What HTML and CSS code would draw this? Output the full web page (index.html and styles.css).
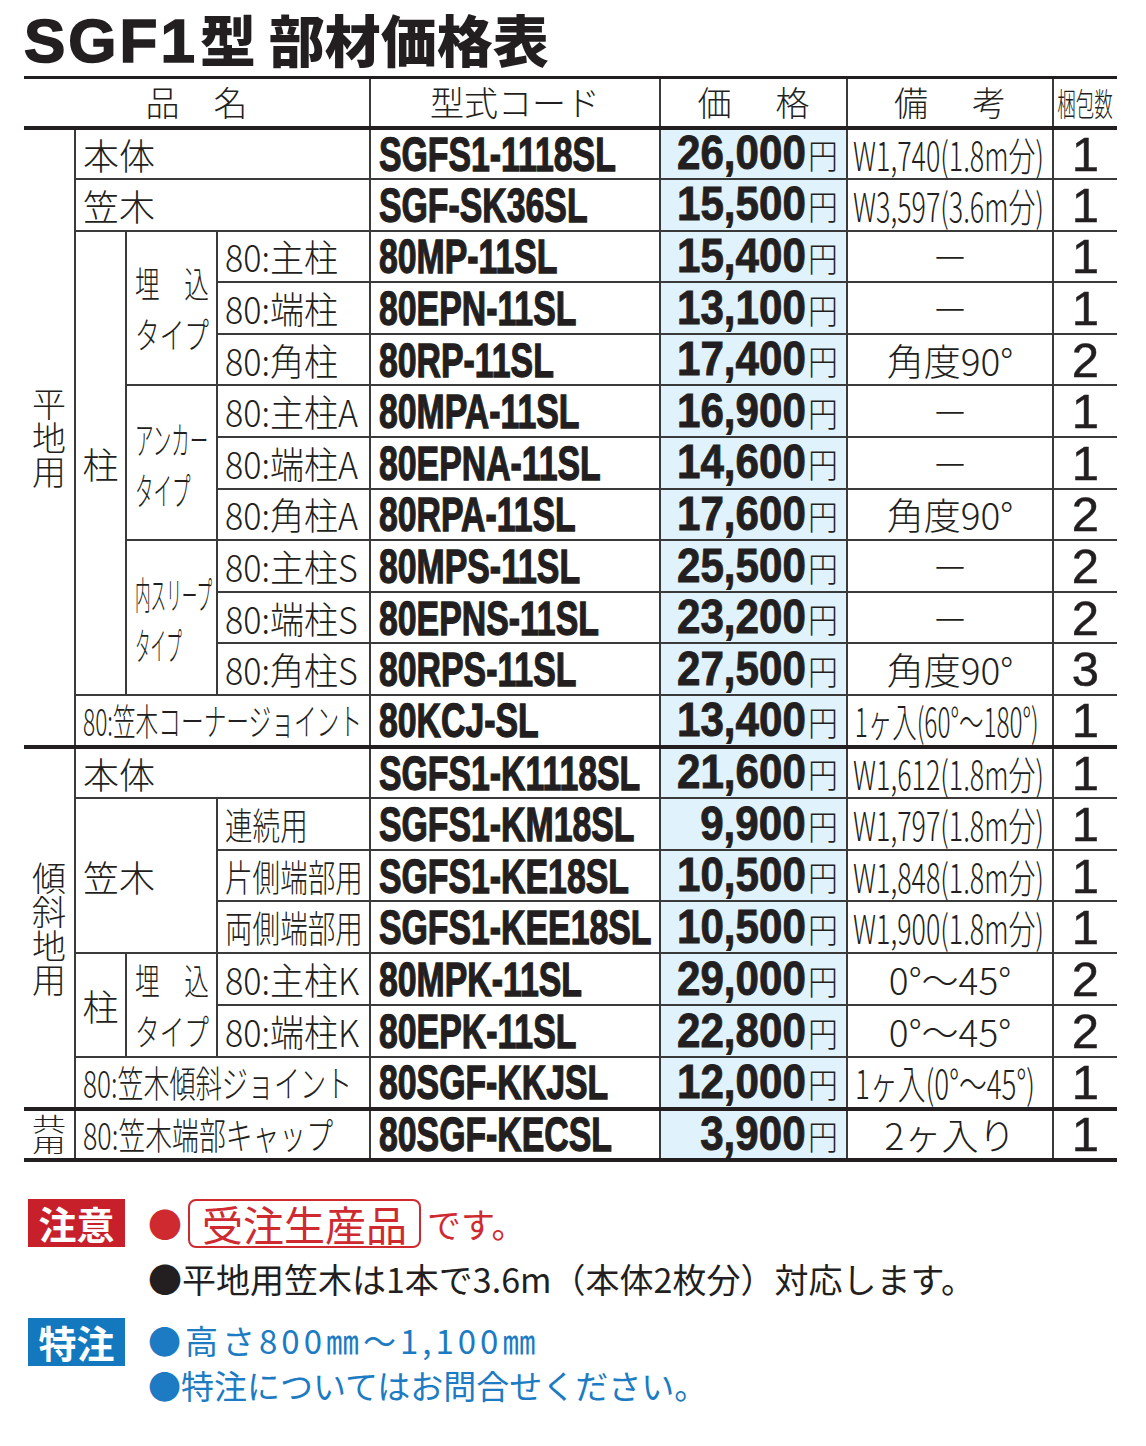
FILE: index.html
```html
<!DOCTYPE html>
<html lang="ja">
<head>
<meta charset="utf-8">
<title>SGF1型 部材価格表</title>
<link rel="stylesheet" href="styles.css">
</head>
<body>
<div class="page">
  <h1 class="title"><span class="t-lat">SGF1</span>型 部材価格表</h1>

  <table class="parts">
    <colgroup>
      <col class="w-grp"><col class="w-sub"><col class="w-type"><col class="w-item">
      <col class="w-code"><col class="w-price"><col class="w-note"><col class="w-qty">
    </colgroup>
    <thead>
      <tr class="head">
        <th colspan="4" class="edge-l">品　名</th>
        <th>型式コード</th>
        <th class="h-sp">価　格</th>
        <th class="h-sp">備　考</th>
        <th class="edge-r"><span class="h-qty">梱包数</span></th>
      </tr>
    </thead>
    <tbody>
      <tr>
        <td rowspan="12" class="grp edge-l">平<br>地<br>用</td>
        <td colspan="3" class="lbl">本体</td>
        <td class="code"><span class="cd">SGFS1-1118SL</span></td>
        <td class="price"><span class="num">26,000</span><span class="yen">円</span></td>
        <td class="note"><span class="nc nc-w">W1,740(1.8m分)</span></td>
        <td class="qty edge-r">1</td>
      </tr>
      <tr>
        <td colspan="3" class="lbl">笠木</td>
        <td class="code"><span class="cd">SGF-SK36SL</span></td>
        <td class="price"><span class="num">15,500</span><span class="yen">円</span></td>
        <td class="note"><span class="nc nc-w">W3,597(3.6m分)</span></td>
        <td class="qty edge-r">1</td>
      </tr>
      <tr>
        <td rowspan="9" class="lbl lbl-c">柱</td>
        <td rowspan="3" class="type"><span class="tp tp-ume"><span class="tl tl-just"><span>埋</span><span>込</span></span><span class="tl">タイプ</span></span></td>
        <td class="item"><span class="it">80:主柱</span></td>
        <td class="code"><span class="cd">80MP-11SL</span></td>
        <td class="price"><span class="num">15,400</span><span class="yen">円</span></td>
        <td class="note note-c">－</td>
        <td class="qty edge-r">1</td>
      </tr>
      <tr>
        <td class="item"><span class="it">80:端柱</span></td>
        <td class="code"><span class="cd">80EPN-11SL</span></td>
        <td class="price"><span class="num">13,100</span><span class="yen">円</span></td>
        <td class="note note-c">－</td>
        <td class="qty edge-r">1</td>
      </tr>
      <tr>
        <td class="item"><span class="it">80:角柱</span></td>
        <td class="code"><span class="cd">80RP-11SL</span></td>
        <td class="price"><span class="num">17,400</span><span class="yen">円</span></td>
        <td class="note note-c">角度90°</td>
        <td class="qty edge-r">2</td>
      </tr>
      <tr>
        <td rowspan="3" class="type"><span class="tp tp-anc"><span class="tl">アンカー</span><span class="tl">タイプ</span></span></td>
        <td class="item"><span class="it">80:主柱A</span></td>
        <td class="code"><span class="cd">80MPA-11SL</span></td>
        <td class="price"><span class="num">16,900</span><span class="yen">円</span></td>
        <td class="note note-c">－</td>
        <td class="qty edge-r">1</td>
      </tr>
      <tr>
        <td class="item"><span class="it">80:端柱A</span></td>
        <td class="code"><span class="cd">80EPNA-11SL</span></td>
        <td class="price"><span class="num">14,600</span><span class="yen">円</span></td>
        <td class="note note-c">－</td>
        <td class="qty edge-r">1</td>
      </tr>
      <tr>
        <td class="item"><span class="it">80:角柱A</span></td>
        <td class="code"><span class="cd">80RPA-11SL</span></td>
        <td class="price"><span class="num">17,600</span><span class="yen">円</span></td>
        <td class="note note-c">角度90°</td>
        <td class="qty edge-r">2</td>
      </tr>
      <tr>
        <td rowspan="3" class="type"><span class="tp tp-sl"><span class="tl">内スリープ</span><span class="tl">タイプ</span></span></td>
        <td class="item"><span class="it">80:主柱S</span></td>
        <td class="code"><span class="cd">80MPS-11SL</span></td>
        <td class="price"><span class="num">25,500</span><span class="yen">円</span></td>
        <td class="note note-c">－</td>
        <td class="qty edge-r">2</td>
      </tr>
      <tr>
        <td class="item"><span class="it">80:端柱S</span></td>
        <td class="code"><span class="cd">80EPNS-11SL</span></td>
        <td class="price"><span class="num">23,200</span><span class="yen">円</span></td>
        <td class="note note-c">－</td>
        <td class="qty edge-r">2</td>
      </tr>
      <tr>
        <td class="item"><span class="it">80:角柱S</span></td>
        <td class="code"><span class="cd">80RPS-11SL</span></td>
        <td class="price"><span class="num">27,500</span><span class="yen">円</span></td>
        <td class="note note-c">角度90°</td>
        <td class="qty edge-r">3</td>
      </tr>
      <tr>
        <td colspan="3" class="lbl"><span class="wd wd-corner">80:笠木コーナージョイント</span></td>
        <td class="code"><span class="cd">80KCJ-SL</span></td>
        <td class="price"><span class="num">13,400</span><span class="yen">円</span></td>
        <td class="note"><span class="nc nc-j1">1ヶ入(60°〜180°)</span></td>
        <td class="qty edge-r">1</td>
      </tr>

      <tr class="sep">
        <td rowspan="7" class="grp edge-l">傾<br>斜<br>地<br>用</td>
        <td colspan="3" class="lbl">本体</td>
        <td class="code"><span class="cd">SGFS1-K1118SL</span></td>
        <td class="price"><span class="num">21,600</span><span class="yen">円</span></td>
        <td class="note"><span class="nc nc-w">W1,612(1.8m分)</span></td>
        <td class="qty edge-r">1</td>
      </tr>
      <tr>
        <td colspan="2" rowspan="3" class="lbl">笠木</td>
        <td class="item"><span class="it it-k">連続用</span></td>
        <td class="code"><span class="cd">SGFS1-KM18SL</span></td>
        <td class="price"><span class="num">9,900</span><span class="yen">円</span></td>
        <td class="note"><span class="nc nc-w">W1,797(1.8m分)</span></td>
        <td class="qty edge-r">1</td>
      </tr>
      <tr>
        <td class="item"><span class="it it-k">片側端部用</span></td>
        <td class="code"><span class="cd">SGFS1-KE18SL</span></td>
        <td class="price"><span class="num">10,500</span><span class="yen">円</span></td>
        <td class="note"><span class="nc nc-w">W1,848(1.8m分)</span></td>
        <td class="qty edge-r">1</td>
      </tr>
      <tr>
        <td class="item"><span class="it it-k">両側端部用</span></td>
        <td class="code"><span class="cd">SGFS1-KEE18SL</span></td>
        <td class="price"><span class="num">10,500</span><span class="yen">円</span></td>
        <td class="note"><span class="nc nc-w">W1,900(1.8m分)</span></td>
        <td class="qty edge-r">1</td>
      </tr>
      <tr>
        <td rowspan="2" class="lbl lbl-c">柱</td>
        <td rowspan="2" class="type"><span class="tp tp-ume"><span class="tl tl-just"><span>埋</span><span>込</span></span><span class="tl">タイプ</span></span></td>
        <td class="item"><span class="it">80:主柱K</span></td>
        <td class="code"><span class="cd">80MPK-11SL</span></td>
        <td class="price"><span class="num">29,000</span><span class="yen">円</span></td>
        <td class="note note-c">0°〜45°</td>
        <td class="qty edge-r">2</td>
      </tr>
      <tr>
        <td class="item"><span class="it">80:端柱K</span></td>
        <td class="code"><span class="cd">80EPK-11SL</span></td>
        <td class="price"><span class="num">22,800</span><span class="yen">円</span></td>
        <td class="note note-c">0°〜45°</td>
        <td class="qty edge-r">2</td>
      </tr>
      <tr>
        <td colspan="3" class="lbl"><span class="wd wd-slope">80:笠木傾斜ジョイント</span></td>
        <td class="code"><span class="cd">80SGF-KKJSL</span></td>
        <td class="price"><span class="num">12,000</span><span class="yen">円</span></td>
        <td class="note"><span class="nc nc-j2">1ヶ入(0°〜45°)</span></td>
        <td class="qty edge-r">1</td>
      </tr>

      <tr class="sep last">
        <td class="grp grp-short edge-l"><span class="squash">共<br>用</span></td>
        <td colspan="3" class="lbl"><span class="wd wd-cap">80:笠木端部キャップ</span></td>
        <td class="code"><span class="cd">80SGF-KECSL</span></td>
        <td class="price"><span class="num">3,900</span><span class="yen">円</span></td>
        <td class="note note-c">2ヶ入り</td>
        <td class="qty edge-r">1</td>
      </tr>
    </tbody>
  </table>

  <div class="notes">
    <div class="nb nb-caution">
      <div class="badge badge-red">注意</div>
      <div class="nb-lines">
        <div class="l-first">
          <span class="dot dot-red">●</span>
          <span class="order-box">受注生産品</span>
          <span class="desu">です。</span>
        </div>
        <div class="l-text l-black">●平地用笠木は1本で3.6m（本体2枚分）対応します。</div>
      </div>
    </div>
    <div class="nb nb-special">
      <div class="badge badge-blue">特注</div>
      <div class="nb-lines">
        <div class="l-text l-blue l-size">●高さ800㎜〜1,100㎜</div>
        <div class="l-text l-blue">●特注についてはお問合せください。</div>
      </div>
    </div>
  </div>
</div>
</body>
</html>
```

FILE: styles.css
```css
* { box-sizing: border-box; }

html, body {
  margin: 0;
  padding: 0;
  background: #ffffff;
}

body {
  font-family: "Noto Sans CJK JP", "Noto Sans", sans-serif;
  color: #231f20;
}

.page {
  width: 1146px;
  padding: 0 29px 0 24px;
}

/* ---------- title ---------- */
.title {
  margin: 0;
  height: 76px;
  font-size: 56px;
  line-height: 76px;
  font-weight: 900;
  white-space: nowrap;
  color: #231f20;
}

.t-lat {
  font-family: "Liberation Sans", Arial, sans-serif;
  font-weight: 700;
  font-size: 62px;
  letter-spacing: 3px;
  -webkit-text-stroke: 1.6px #231f20;
  margin-right: 2px;
}

/* ---------- table ---------- */
.parts {
  width: 1093px;
  border-collapse: collapse;
  table-layout: fixed;
}

.w-grp { width: 51px; }
.w-sub { width: 51px; }
.w-type { width: 91px; }
.w-item { width: 153px; }
.w-code { width: 290px; }
.w-price { width: 187px; }
.w-note { width: 206px; }
.w-qty { width: 64px; }

.parts th,
.parts td {
  border: 2px solid #3a3a3a;
  padding: 0;
  vertical-align: middle;
  white-space: nowrap;
  font-weight: 400;
  line-height: 0;
}

.parts tbody tr { height: 51.6px; }
.parts tr.head { height: 50px; }

.parts .head th {
  border-top: 3px solid #231f20;
  border-bottom: 4px solid #231f20;
  font-size: 34px;
  line-height: 40px;
  font-weight: 300;
  text-align: center;
}

.parts .head .h-sp { letter-spacing: 5px; text-indent: 5px; }

.h-qty {
  display: inline-block;
  font-size: 32px;
  line-height: 40px;
  margin: 0 -20px;
  transform: scaleX(0.58);
  transform-origin: center center;
}

.parts tr.sep > td { border-top: 4px solid #231f20; }
.parts tr.last > td { border-bottom: 4px solid #231f20; }

.parts .edge-l { border-left: none; }
.parts .edge-r { border-right: none; }

/* group column */
.parts td.grp {
  font-size: 34px;
  line-height: 34px;
  font-weight: 300;
  text-align: center;
}
.parts td.grp-short { line-height: 0; }

.squash {
  display: block;
  height: 68px;
  margin: -14px 0;
  line-height: 34px;
  transform: scaleY(0.6);
  transform-origin: center center;
}

/* labels */
.parts td.lbl {
  font-size: 36px;
  line-height: 40px;
  font-weight: 300;
  padding-left: 7px;
}
.parts td.lbl-c {
  text-align: center;
  padding-left: 0;
}

.wd {
  display: inline-block;
  font-size: 37px;
  line-height: 40px;
  transform-origin: left center;
}
.wd-corner { transform: scaleX(0.613); }
.wd-slope { transform: scaleX(0.705); }
.wd-cap { transform: scaleX(0.725); }

/* type column */
.parts td.type {
  padding-left: 8px;
  font-weight: 300;
}
.tp {
  display: inline-block;
  line-height: 51px;
  vertical-align: middle;
  transform-origin: left center;
}
.tl { display: block; white-space: nowrap; }
.tl-just {
  display: flex;
  justify-content: space-between;
  width: 108px;
}
.tp-ume { font-size: 36px; transform: scaleX(0.685); }
.tp-anc { font-size: 38px; transform: scaleX(0.487); }
.tp-sl { font-size: 38px; transform: scaleX(0.41); }

/* item column */
.parts td.item {
  padding-left: 7px;
  font-weight: 300;
}
.it {
  display: inline-block;
  font-size: 37px;
  line-height: 40px;
  transform: scaleX(0.92);
  transform-origin: left center;
}
.it-k { transform: scaleX(0.745); }

/* code column */
.parts td.code {
  padding-left: 8px;
}
.cd {
  display: inline-block;
  font-family: "Liberation Sans", Arial, sans-serif;
  font-weight: 700;
  font-size: 49px;
  line-height: 40px;
  -webkit-text-stroke: 1.3px #231f20;
  transform: scaleX(0.69);
  transform-origin: left center;
}

/* price column */
.parts td.price {
  background: #e0f2fc;
  text-align: right;
  padding-right: 8px;
}
.num {
  display: inline-block;
  font-family: "Liberation Sans", Arial, sans-serif;
  font-weight: 700;
  font-size: 49px;
  line-height: 40px;
  -webkit-text-stroke: 0.9px #231f20;
  transform: scaleX(0.86);
  transform-origin: right center;
  margin-left: -30px;
  margin-right: -2px;
}
.yen {
  display: inline-block;
  font-size: 34px;
  line-height: 40px;
  font-weight: 300;
  transform: scaleX(0.88);
  transform-origin: right center;
}

/* note column */
.parts td.note {
  padding-left: 5px;
  font-weight: 300;
}
.parts td.note-c {
  text-align: center;
  padding-left: 0;
  font-size: 37px;
  line-height: 40px;
}
.nc {
  display: inline-block;
  font-size: 40px;
  line-height: 40px;
  transform-origin: left center;
}
.nc-w { transform: scaleX(0.672); }
.nc-j1 { transform: scaleX(0.61); padding-left: 3px; }
.nc-j2 { transform: scaleX(0.695); padding-left: 3px; }

/* qty column */
.parts td.qty {
  text-align: center;
  font-family: "Liberation Sans", Arial, sans-serif;
  font-size: 49px;
  line-height: 40px;
  -webkit-text-stroke: 0.5px #231f20;
}

/* ---------- notes ---------- */
.notes {
  margin-top: 37px;
  padding-left: 4px;
}

.nb {
  display: flex;
  align-items: flex-start;
  gap: 23px;
}

.nb-special { margin-top: 17px; }

.badge {
  flex: none;
  width: 97px;
  height: 48px;
  color: #ffffff;
  font-weight: 700;
  font-size: 38px;
  line-height: 48px;
  text-align: center;
}
.badge-red { background: #c8202a; }
.badge-blue { background: #1478be; }

.nb-lines {
  display: flex;
  flex-direction: column;
}

.l-first {
  display: flex;
  align-items: center;
  height: 49px;
  color: #cf2a30;
}

.dot {
  font-size: 34px;
  line-height: 40px;
  width: 40px;
}

.order-box {
  display: inline-block;
  height: 49px;
  padding: 0 12px;
  border: 2px solid #cf2a30;
  border-radius: 8px;
  font-size: 41px;
  line-height: 44px;
}

.desu {
  font-size: 34px;
  line-height: 40px;
  margin-left: 6px;
}

.l-text {
  font-size: 34px;
  line-height: 45px;
  white-space: nowrap;
}
.l-black {
  margin-top: 8px;
  color: #231f20;
}
.l-blue {
  color: #1c7bc2;
  font-size: 33px;
}
.l-size { letter-spacing: 4px; }
```
